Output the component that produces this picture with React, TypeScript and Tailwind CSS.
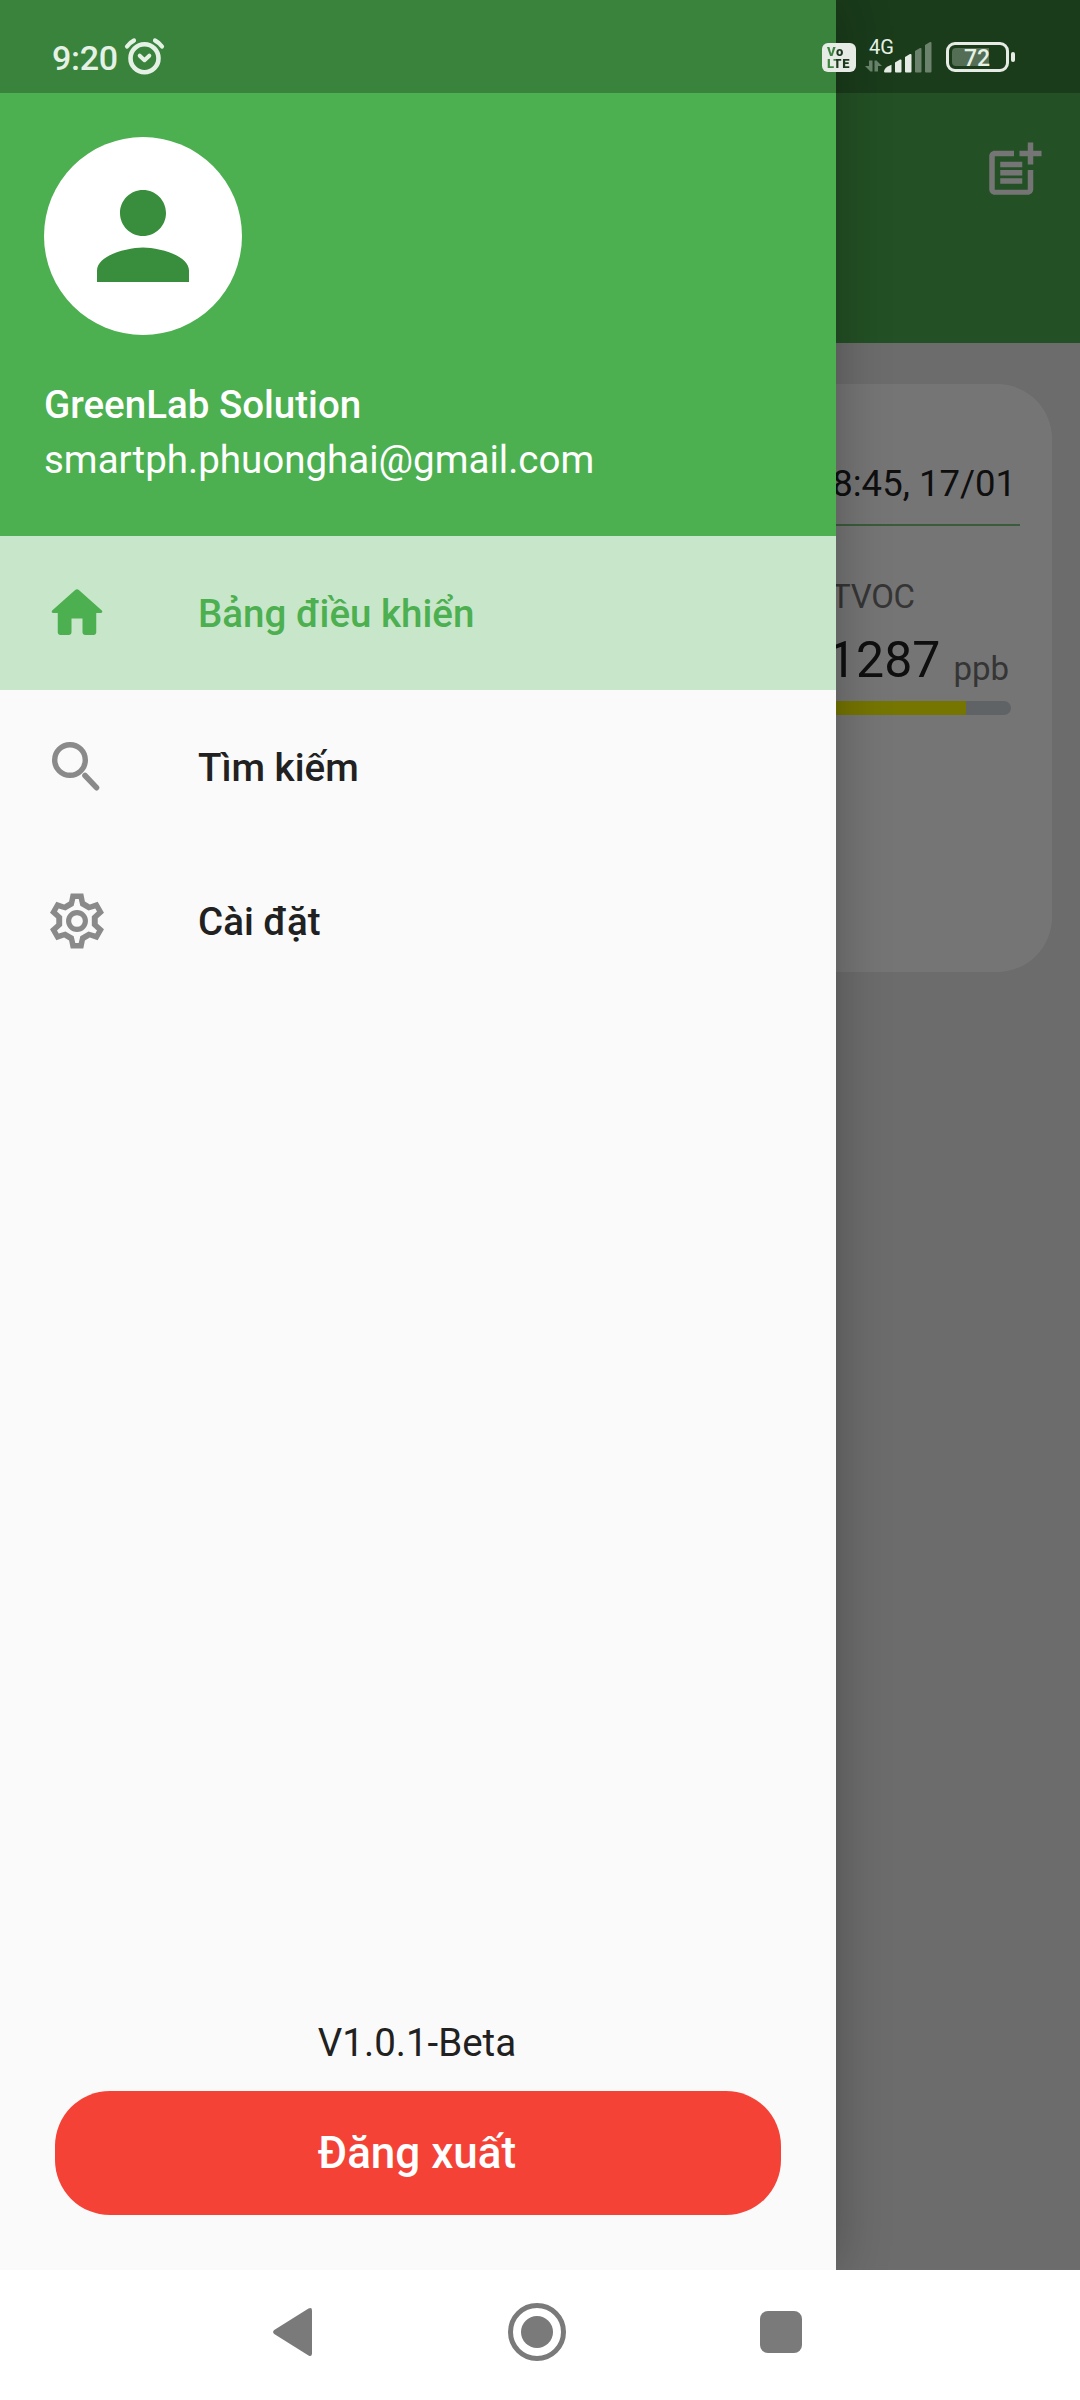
import type { ReactNode } from "react";

const HomeIcon = () => (
  <svg viewBox="0 0 24 24" className="h-[66px] w-[66px] fill-[#4caf50]">
    <path d="M10 19v-5h4v5c0 .55.45 1 1 1h3c.55 0 1-.45 1-1v-7h1.7c.46 0 .68-.57.33-.87L12.67 3.6c-.38-.34-.96-.34-1.34 0l-8.36 7.53c-.34.3-.13.87.33.87H5v7c0 .55.45 1 1 1h3c.55 0 1-.45 1-1z" />
  </svg>
);

const SearchIcon = () => (
  <svg viewBox="0 0 66 66" className="h-[66px] w-[66px] fill-none stroke-[#8a8a8a]">
    <circle cx="26" cy="26" r="15.3" strokeWidth="5.4" />
    <path d="M41 41.5 52.5 53.7" strokeWidth="5.6" strokeLinecap="round" />
  </svg>
);

const GEAR_ANGLES = [0, 60, 120, 180, 240, 300];

function gearPath(points: [number, number][]) {
  const all = GEAR_ANGLES.flatMap((deg) => {
    const a = (deg * Math.PI) / 180;
    return points.map(([x, y]) => `${(x * Math.cos(a) - y * Math.sin(a)).toFixed(2)} ${(x * Math.sin(a) + y * Math.cos(a)).toFixed(2)}`);
  });
  return `M${all.join("L")}Z`;
}

const GEAR =
  gearPath([[-7.9, -19.4], [-6.3, -27.5], [6.3, -27.5], [7.9, -19.4]]) +
  gearPath([[-3.3, -15.2], [-1.7, -22.1], [1.7, -22.1], [3.3, -15.2]]);

const GearIcon = () => (
  <svg viewBox="-33 -33 66 66" className="h-[66px] w-[66px]">
    <path d={GEAR} fill="#8a8a8a" fillRule="evenodd" />
    <circle r="8.4" fill="none" stroke="#8a8a8a" strokeWidth="5.1" />
  </svg>
);

const PostAddIcon = () => (
  <svg viewBox="0 0 24 24" className="h-[66px] w-[66px] fill-white">
    <path d="M17 19.22H5V7h7V5H5c-1.1 0-2 .9-2 2v12c0 1.1.9 2 2 2h12c1.1 0 2-.9 2-2v-7h-2v7.22z" />
    <path d="M19 2h-2v3h-3v2h3v3h2V7h3V5h-3V2zM7 9h8v2H7zM7 12h8v2H7zM7 15h8v2H7z" />
  </svg>
);

function StatusBar() {
  return (
    <div className="absolute inset-x-0 top-0 flex h-[93px] items-start bg-black/25 text-[#e6f1e6]">
      <span className="ml-[52px] mt-[38px] w-[66px] text-[34px] font-medium leading-[40px] tracking-[-0.3px]">9:20</span>
      <svg viewBox="0 0 42 40" className="ml-[6px] mt-[37px] h-[40px] w-[42px] fill-none stroke-[#e6f1e6]" strokeLinecap="round">
        <circle cx="20.5" cy="21.3" r="14" strokeWidth="4.6" />
        <path d="M3 9.5q3-4 7-6M31 3.500q4 2 7 6" strokeWidth="4.2" />
        <path d="m15.700 18.700 4.800 4.500 4.800-4.500" strokeWidth="4" strokeLinejoin="round" />
      </svg>
      <div className="ml-[656px] mt-[43px] h-[29px] w-[34px] rounded-[6px] bg-[#e6ebe6]">
        <div className="flex h-full flex-col bg-[linear-gradient(90deg,#3b853e_14px,#1d3a1e_14px)] bg-clip-text pl-[5px] pt-[3px] text-[13px] font-black leading-[12px] tracking-[0.6px] text-transparent">
          <span>Vo</span>
          <span>LTE</span>
        </div>
      </div>
      <div className="ml-[9px] mt-[36px] flex h-[38px] w-[68px] items-start">
        <div className="flex w-[19px] flex-col">
          <span className="ml-[4px] whitespace-nowrap text-[20px] leading-[22px]">4G</span>
          <svg viewBox="0 0 17 12" className="mt-[2px] h-[12px] w-[17px] shrink-0 fill-[#68806a]">
            <path d="M7.500 .5v11h-2L0 6h4V.5zM9.500 11.500V.5h2L17 6h-4v5.500z" />
          </svg>
        </div>
        <svg viewBox="0 0 49 38" className="h-[38px] w-[49px] shrink-0 fill-[#e6ebe6]">
          <path d="M0 35.500q0-4 7.500-6.800v6.800q0 1-1 1h-5.500q-1 0-1-1z" />
          <path d="M11 26.500l5-3q1.500-.500 1.500 1v11q0 1-1 1H12q-1 0-1-1z" />
          <path d="M21 21l5-3q1.500-.5 1.500 1v16.500q0 1-1 1H22q-1 0-1-1z" />
          <path className="fill-[#6c826d]" d="M31 15l5-3q1.500-.5 1.500 1v22.500q0 1-1 1H32q-1 0-1-1z" />
          <path className="fill-[#6c826d]" d="M41 9l5-3q1.500-.5 1.500 1v28.500q0 1-1 1H42q-1 0-1-1z" />
        </svg>
      </div>
      <div className="ml-[13px] mt-[42px] flex items-center">
        <div className="flex h-[30px] w-[63px] rounded-[9px] border-[3px] border-[#e6ebe6] p-[3px]">
          <div className="h-[18px] w-[37px] rounded-l-[4px] bg-[#546e55]">
            <span className="ml-[12px] block text-[23px] font-medium leading-[21px]">72</span>
          </div>
        </div>
        <div className="ml-[2px] h-[10px] w-[4px] rounded-[2px] bg-[#e6ebe6]" />
      </div>
    </div>
  );
}

function DashboardPage() {
  return (
    <div className="flex h-full flex-col bg-[#ebebeb]">
      <header className="flex h-[343px] shrink-0 justify-end bg-[#4caf50] pr-[33px] pt-[137px]">
        <PostAddIcon />
      </header>
      <section className="ml-[28px] mr-[28px] mt-[41px] flex h-[588px] flex-col rounded-[55px] bg-white pl-[33px] pr-[32px] pt-[77px] text-[#212121]">
        <div className="flex h-[65px] justify-end border-b-2 border-[#81c784] pr-[4px] text-[36.500px] leading-[45px]">8:45, 17/01</div>
        <div className="ml-auto mr-[8px] mt-[51px] flex w-[181px] flex-col">
          <span className="text-[33px] leading-[40px] tracking-[-0.3px] text-[#757575]">TVOC</span>
          <div className="mt-[14px] flex h-[58px] items-start justify-end">
            <span className="text-[50px] leading-[58px]">1287</span>
            <span className="ml-[13px] mr-[3px] pt-[18px] text-[33px] leading-[40px] text-[#757575]">ppb</span>
          </div>
          <div className="mt-[12px] flex h-[14px] w-[180px] overflow-hidden rounded-full bg-[#cfd8dc]">
            <div className="w-[135px] bg-[#ffff00]" />
          </div>
        </div>
      </section>
    </div>
  );
}

function DrawerItem({ icon, label, active }: { icon: ReactNode; label: string; active?: boolean }) {
  return (
    <li
      className={
        active
          ? "flex h-[154px] items-center bg-[#c8e6c9] pl-[44px] text-[#4caf50]"
          : "flex h-[154px] items-center pl-[44px] text-[#212121]"
      }
    >
      {icon}
      <span className="ml-[88px] pt-[2px] text-[38.500px] font-medium">{label}</span>
    </li>
  );
}

function Drawer() {
  return (
    <aside className="absolute inset-y-0 left-0 flex w-[836px] flex-col bg-[#fafafa] shadow-[0_0_50px_rgba(0,0,0,0.28)]">
      <div className="flex h-[536px] flex-col bg-[#4caf50] pl-[44px] pt-[137px] text-[38.500px] leading-[55px] text-white">
        <div className="flex h-[198px] w-[198px] items-center justify-center rounded-full bg-white">
          <svg viewBox="0 0 24 24" className="h-[138px] w-[138px] fill-[#388e3c]">
            <path d="M12 12c2.210 0 4-1.790 4-4s-1.790-4-4-4-4 1.790-4 4 1.790 4 4 4zm0 2c-2.670 0-8 1.340-8 4v2h16v-2c0-2.660-5.330-4-8-4z" />
          </svg>
        </div>
        <p className="mt-[42px] font-medium">GreenLab Solution</p>
        <p>smartph.phuonghai@gmail.com</p>
      </div>
      <ul className="flex flex-col">
        <DrawerItem icon={<HomeIcon />} label="Bảng điều khiển" active />
        <DrawerItem icon={<SearchIcon />} label="Tìm kiếm" />
        <DrawerItem icon={<GearIcon />} label="Cài đặt" />
      </ul>
      <div className="mt-auto flex flex-col items-center px-[55px] pb-[55px]">
        <p className="pr-[2px] text-[38.500px] leading-[48px] text-[#212121]">V1.0.1-Beta</p>
        <button className="mt-[24px] h-[124px] w-full rounded-[55px] bg-[#f44336] pr-[2px] text-[44px] font-medium text-white">Đăng xuất</button>
      </div>
    </aside>
  );
}

function NavigationBar() {
  return (
    <nav className="flex h-[130px] shrink-0 items-center bg-white pb-[6px] pl-[273px]">
      <svg viewBox="0 0 39 48" className="h-[48px] w-[39px] fill-[#7a7a7a]">
        <path d="M35.500.600Q39-1.200 39 2.500v43q0 3.700-3.500 1.900L1.200 26q-2.200-2 0-4z" />
      </svg>
      <div className="ml-[196px] flex h-[58px] w-[58px] items-center justify-center rounded-full border-[5px] border-[#7a7a7a]">
        <div className="h-[32px] w-[32px] rounded-full bg-[#7a7a7a]" />
      </div>
      <div className="ml-[194px] h-[42px] w-[42px] rounded-[8px] bg-[#7a7a7a]" />
    </nav>
  );
}

export default function App() {
  return (
    <div className="flex h-[2400px] w-[1080px] flex-col overflow-hidden font-[Roboto,sans-serif]">
      <main className="relative h-[2270px] shrink-0 overflow-hidden">
        <DashboardPage />
        <div className="absolute inset-0 bg-black/54" />
        <Drawer />
        <StatusBar />
      </main>
      <NavigationBar />
    </div>
  );
}
